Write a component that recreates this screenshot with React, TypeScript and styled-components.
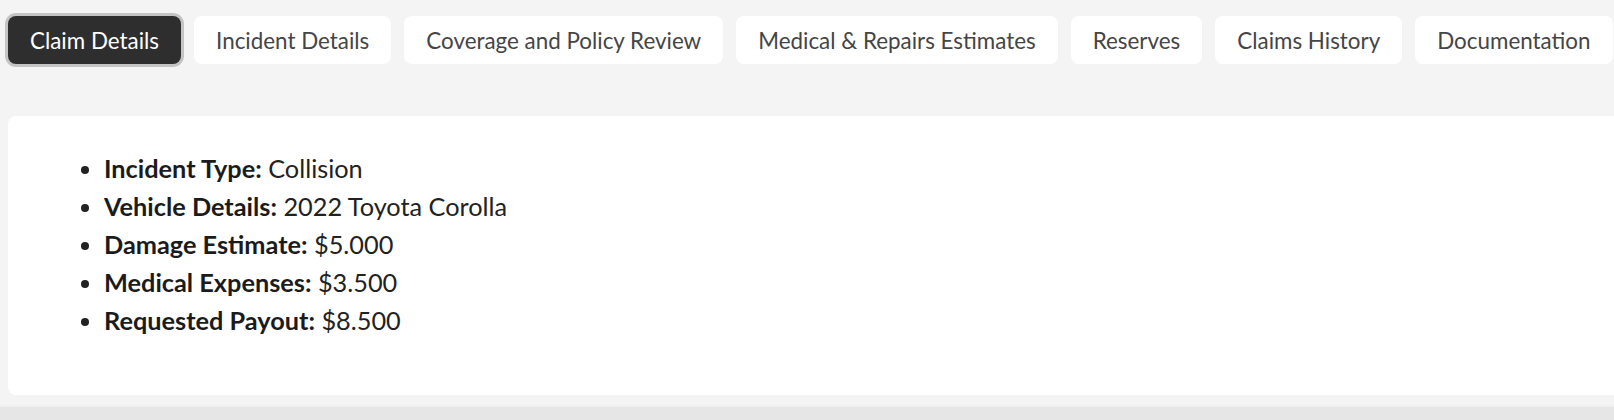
import * as React from "react";
import styled, { createGlobalStyle } from "styled-components";

const GlobalStyle = createGlobalStyle`
	html, body {
		margin: 0;
		padding: 0;
		background: #f4f4f4;
		font-family: Lato, "Open Sans", sans-serif;
		overflow: hidden;
	}
`;

const Page = styled.div`
	display: flex;
	flex-direction: column;
	height: 420px;
	padding: 16px 0 0 8px;
	box-sizing: border-box;
`;

const TabBar = styled.div`
	display: flex;
	gap: 13px;
	white-space: nowrap;
`;

const Tab = styled.button<{ $active?: boolean }>`
	font-family: inherit;
	font-size: 22.4px;
	line-height: 27px;
	padding: 10.5px 22px;
	border: none;
	border-radius: 8px;
	background: ${(p) => (p.$active ? "#2e2e2e" : "#ffffff")};
	color: ${(p) => (p.$active ? "#ffffff" : "#454545")};
	box-shadow: ${(p) => (p.$active ? "0 0 0 3px #c4c4c4" : "none")};
	cursor: pointer;
	flex-shrink: 0;
`;

const Card = styled.div`
	margin-top: 52px;
	width: calc(100% + 40px);
	height: 279px;
	box-sizing: border-box;
	background: #ffffff;
	border-radius: 8px;
	padding: 33px 0 0 56px;
`;

const DetailList = styled.ul`
	margin: 0;
	padding-left: 40px;
	font-size: 25.3px;
	line-height: 38px;
	color: #222;
`;

const Label = styled.b`
	font-weight: 700;
	color: #1b1b1b;
`;

const Footer = styled.div`
	margin-top: 10px;
	flex: 1;
	margin-left: -8px;
	background: #e6e6e6;
	border-top: 2px solid #efefef;
`;

const tabs = [
	"Claim Details",
	"Incident Details",
	"Coverage and Policy Review",
	"Medical & Repairs Estimates",
	"Reserves",
	"Claims History",
	"Documentation",
];

const details = [
	{ label: "Incident Type:", value: "Collision" },
	{ label: "Vehicle Details:", value: "2022 Toyota Corolla" },
	{ label: "Damage Estimate:", value: "$5.000" },
	{ label: "Medical Expenses:", value: "$3.500" },
	{ label: "Requested Payout:", value: "$8.500" },
];

const App: React.FC = () => {
	const [active, setActive] = React.useState(0);
	return (
		<>
			<GlobalStyle />
			<Page>
				<TabBar>
					{tabs.map((t, i) => (
						<Tab key={t} $active={i === active} onClick={() => setActive(i)}>
							{t}
						</Tab>
					))}
				</TabBar>
				<Card>
					<DetailList>
						{details.map((d) => (
							<li key={d.label}>
								<Label>{d.label}</Label> {d.value}
							</li>
						))}
					</DetailList>
				</Card>
				<Footer />
			</Page>
		</>
	);
};

export default App;
